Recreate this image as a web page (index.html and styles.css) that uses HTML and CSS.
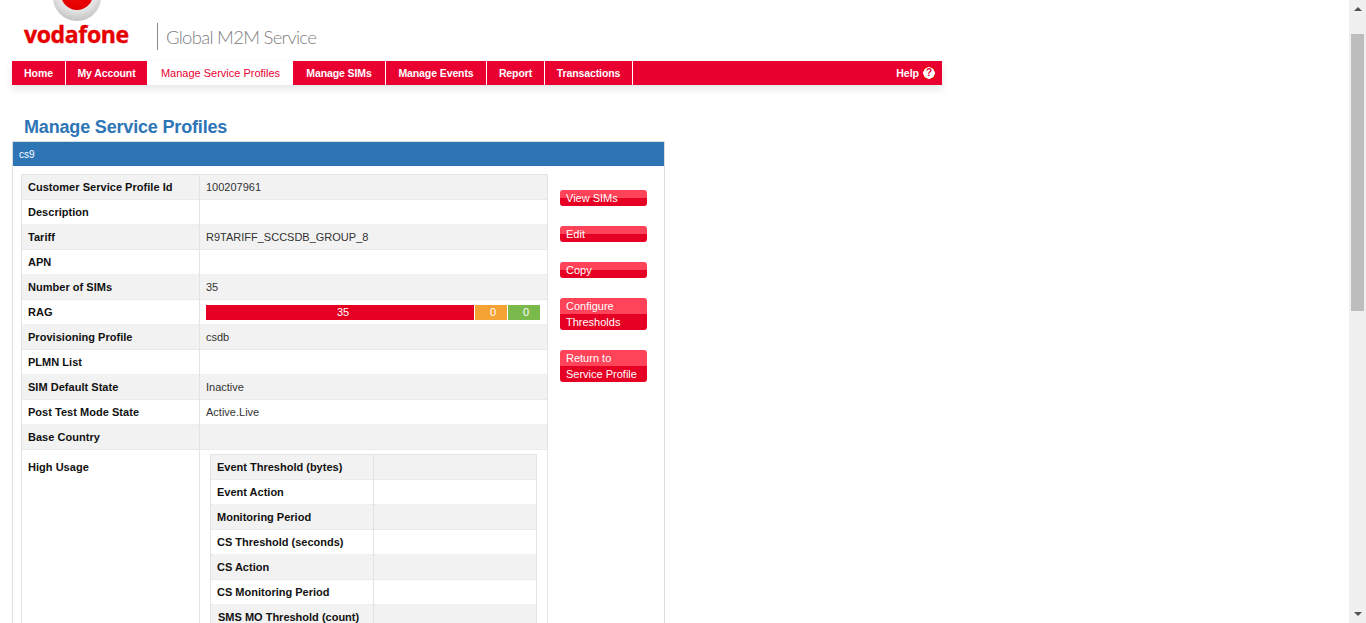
FILE: index.html
```html
<!DOCTYPE html>
<html>
<head>
  <link rel="stylesheet" href="styles.css">
  <title>Manage Service Profiles</title>
</head>
<body>
  <div class="page">
    <div class="header">
      <div class="logo">
        <div class="logo-mark"><div class="logo-dot"></div></div>
        <span class="logo-text">vodafone</span>
      </div>
      <div class="service-name">Global M2M Service</div>
    </div>

    <div class="nav">
      <a class="nav-item">Home</a>
      <a class="nav-item">My Account</a>
      <a class="nav-item active">Manage Service Profiles</a>
      <a class="nav-item">Manage SIMs</a>
      <a class="nav-item">Manage Events</a>
      <a class="nav-item">Report</a>
      <a class="nav-item">Transactions</a>
      <a class="nav-help">Help <span class="help-icon">?</span></a>
    </div>

    <h1>Manage Service Profiles</h1>

    <div class="panel">
      <div class="panel-title">cs9</div>
      <div class="panel-body">
        <table class="details">
          <tr><th>Customer Service Profile Id</th><td>100207961</td></tr>
          <tr><th>Description</th><td></td></tr>
          <tr><th>Tariff</th><td>R9TARIFF_SCCSDB_GROUP_8</td></tr>
          <tr><th>APN</th><td></td></tr>
          <tr><th>Number of SIMs</th><td>35</td></tr>
          <tr>
            <th>RAG</th>
            <td>
              <div class="rag">
                <div class="rag-red">35</div>
                <div class="rag-amber">0</div>
                <div class="rag-green">0</div>
              </div>
            </td>
          </tr>
          <tr><th>Provisioning Profile</th><td>csdb</td></tr>
          <tr><th>PLMN List</th><td></td></tr>
          <tr><th>SIM Default State</th><td>Inactive</td></tr>
          <tr><th>Post Test Mode State</th><td>Active.Live</td></tr>
          <tr><th>Base Country</th><td></td></tr>
          <tr class="usage-row">
            <th>High Usage</th>
            <td>
              <table class="thresholds">
                <tr><th>Event Threshold (bytes)</th><td></td></tr>
                <tr><th>Event Action</th><td></td></tr>
                <tr><th>Monitoring Period</th><td></td></tr>
                <tr><th>CS Threshold (seconds)</th><td></td></tr>
                <tr><th>CS Action</th><td></td></tr>
                <tr><th>CS Monitoring Period</th><td></td></tr>
                <tr><th>SMS MO Threshold (count)</th><td></td></tr>
              </table>
            </td>
          </tr>
        </table>

        <div class="actions">
          <a class="btn">View SIMs</a>
          <a class="btn">Edit</a>
          <a class="btn">Copy</a>
          <a class="btn">Configure<br>Thresholds</a>
          <a class="btn">Return to<br>Service Profile</a>
        </div>
      </div>
    </div>
  </div>

  <div class="scrollbar">
    <div class="arrow-up"></div>
    <div class="scroll-track"><div class="scroll-thumb"></div></div>
    <div class="arrow-down"></div>
  </div>
</body>
</html>
```

FILE: styles.css
```css
html, body {
  height: 100%;
  margin: 0;
  overflow: hidden;
}
body {
  display: flex;
  font-family: "Liberation Sans", Arial, sans-serif;
  font-size: 11px;
  color: #333;
  background-color: #fff;
}
.page {
  flex: 1;
  min-width: 0;
  height: 623px;
  overflow: hidden;
  padding-left: 12px;
}

/* header */
.header {
  display: flex;
  height: 61px;
  width: 930px;
  box-sizing: border-box;
  padding-left: 12px;
}
.logo {
  position: relative;
  width: 133px;
  height: 61px;
}
.logo-mark {
  position: absolute;
  left: 29px;
  top: -27px;
  width: 48px;
  height: 48px;
  border-radius: 50%;
  background: radial-gradient(circle at 50% 35%, #fafafa 0%, #e2e2e2 55%, #a8a8a8 100%);
}
.logo-dot {
  width: 32px;
  height: 32px;
  margin: 5px 0 0 8px;
  border-radius: 50%;
  background: radial-gradient(circle at 50% 40%, #f01010 0%, #e60000 70%, #c40000 100%);
}
.logo-text {
  position: absolute;
  left: 0;
  top: 19px;
  font-family: "Open Sans", "Liberation Sans", sans-serif;
  font-size: 23px;
  line-height: 30px;
  font-weight: 700;
  letter-spacing: -0.35px;
  -webkit-text-stroke: 0.4px #e60000;
  color: #e60000;
}
.service-name {
  height: 27px;
  margin-top: 23px;
  padding-left: 8px;
  border-left: 1px solid #888;
  font-family: Lato, sans-serif;
  font-weight: 300;
  font-size: 18.5px;
  letter-spacing: -0.72px;
  line-height: 29px;
  color: #808080;
}

/* main menu */
.nav {
  display: grid;
  grid-template-columns: 54px 82px 145px 93px 101px 58px 88px 1fr;
  width: 930px;
  height: 24px;
  background-color: #e90031;
  box-shadow: 0 4px 8px rgba(0, 0, 0, 0.1);
}
.nav-item {
  border-right: 1px solid #fff;
  font-size: 10.5px;
  font-weight: bold;
  letter-spacing: -0.1px;
  line-height: 24px;
  text-align: center;
  color: #fff;
}
.nav-item.active {
  border-right: none;
  background-color: #fff;
  font-size: 11px;
  font-weight: normal;
  letter-spacing: 0;
  color: #e90031;
}
.nav-help {
  display: flex;
  align-items: center;
  justify-content: flex-end;
  gap: 4px;
  padding-right: 7px;
  font-size: 10.5px;
  font-weight: bold;
  color: #fff;
}
.help-icon {
  width: 12px;
  height: 12px;
  background: radial-gradient(circle, #fff 5.5px, #f00000 6px);
  color: #e90031;
  font-size: 10px;
  font-weight: bold;
  line-height: 12px;
  text-align: center;
}

h1 {
  margin: 32px 0 3px 12px;
  font-size: 18px;
  letter-spacing: -0.17px;
  line-height: 21px;
  color: #2e75b6;
}

/* profile panel */
.panel {
  width: 651px;
  border: 1px solid #ddd;
  border-bottom: none;
}
.panel-title {
  height: 24px;
  padding-left: 6px;
  background-color: #2e75b6;
  font-size: 10px;
  line-height: 25px;
  color: #fff;
}
.panel-body {
  display: flex;
  align-items: flex-start;
  padding: 8px 8px 0;
}
table {
  border-collapse: collapse;
  table-layout: fixed;
}
th, td {
  height: 24px;
  padding: 0 6px;
  text-align: left;
  vertical-align: middle;
  line-height: 14px;
}
th {
  color: #111;
}
.details {
  width: 527px;
  border: 1px solid #e4e4e4;
}
.details > tbody > tr > th {
  width: 165px;
  border-right: 1px solid #e4e4e4;
  letter-spacing: 0.03px;
}
.details > tbody > tr:nth-child(odd) {
  background-color: #f2f2f2;
}
.details > tbody > tr > th,
.details > tbody > tr > td {
  border-bottom: 1px dotted #e2e2e2;
}
.usage-row > th,
.usage-row > td {
  vertical-align: top !important;
  background-color: #fff;
}
.usage-row > th {
  padding-top: 10px;
}
.usage-row > td {
  padding: 4px 10px 0;
}
.thresholds {
  width: 327px;
  border: 1px solid #e4e4e4;
}
.thresholds th {
  width: 150px;
  border-right: 1px solid #e4e4e4;
}
.thresholds tr:nth-child(odd) {
  background-color: #f2f2f2;
}
.thresholds tr:last-child th {
  padding-left: 7px;
}
.thresholds th, .thresholds td {
  border-bottom: 1px dotted #e6e6e6;
}

/* RAG bar */
.rag {
  display: flex;
  gap: 1px;
  height: 15px;
  width: 334px;
  line-height: 15px;
  text-align: center;
  color: #fff;
}
.rag > div {
  box-sizing: border-box;
}
.rag-red {
  width: 268px;
  padding-left: 6px;
  background-color: #e60023;
}
.rag-amber {
  width: 32px;
  padding-left: 4px;
  background-color: #f5a334;
}
.rag-green {
  width: 32px;
  padding-left: 4px;
  background-color: #7ab94c;
}

/* side buttons */
.actions {
  display: flex;
  flex-direction: column;
  align-items: flex-start;
  gap: 20px;
  margin: 16px 0 0 12px;
}
.btn {
  display: block;
  width: 81px;
  padding-left: 6px;
  border-radius: 3px;
  background: linear-gradient(#ff4358 50%, #e60023 50%);
  line-height: 16px;
  color: #fff;
}

/* scrollbar */
.scrollbar {
  display: flex;
  flex-direction: column;
  align-items: center;
  flex: none;
  width: 17px;
  height: 623px;
  background-color: #f0f0f0;
}
.arrow-up, .arrow-down {
  width: 0;
  height: 0;
  margin: 7px 0;
  border-left: 4px solid transparent;
  border-right: 4px solid transparent;
}
.arrow-up {
  border-bottom: 4px solid #505050;
}
.arrow-down {
  border-top: 4px solid #505050;
}
.scroll-track {
  flex: 1;
  width: 13px;
  padding-top: 16px;
}
.scroll-thumb {
  height: 277px;
  background-color: #bdbdbd;
}
```
